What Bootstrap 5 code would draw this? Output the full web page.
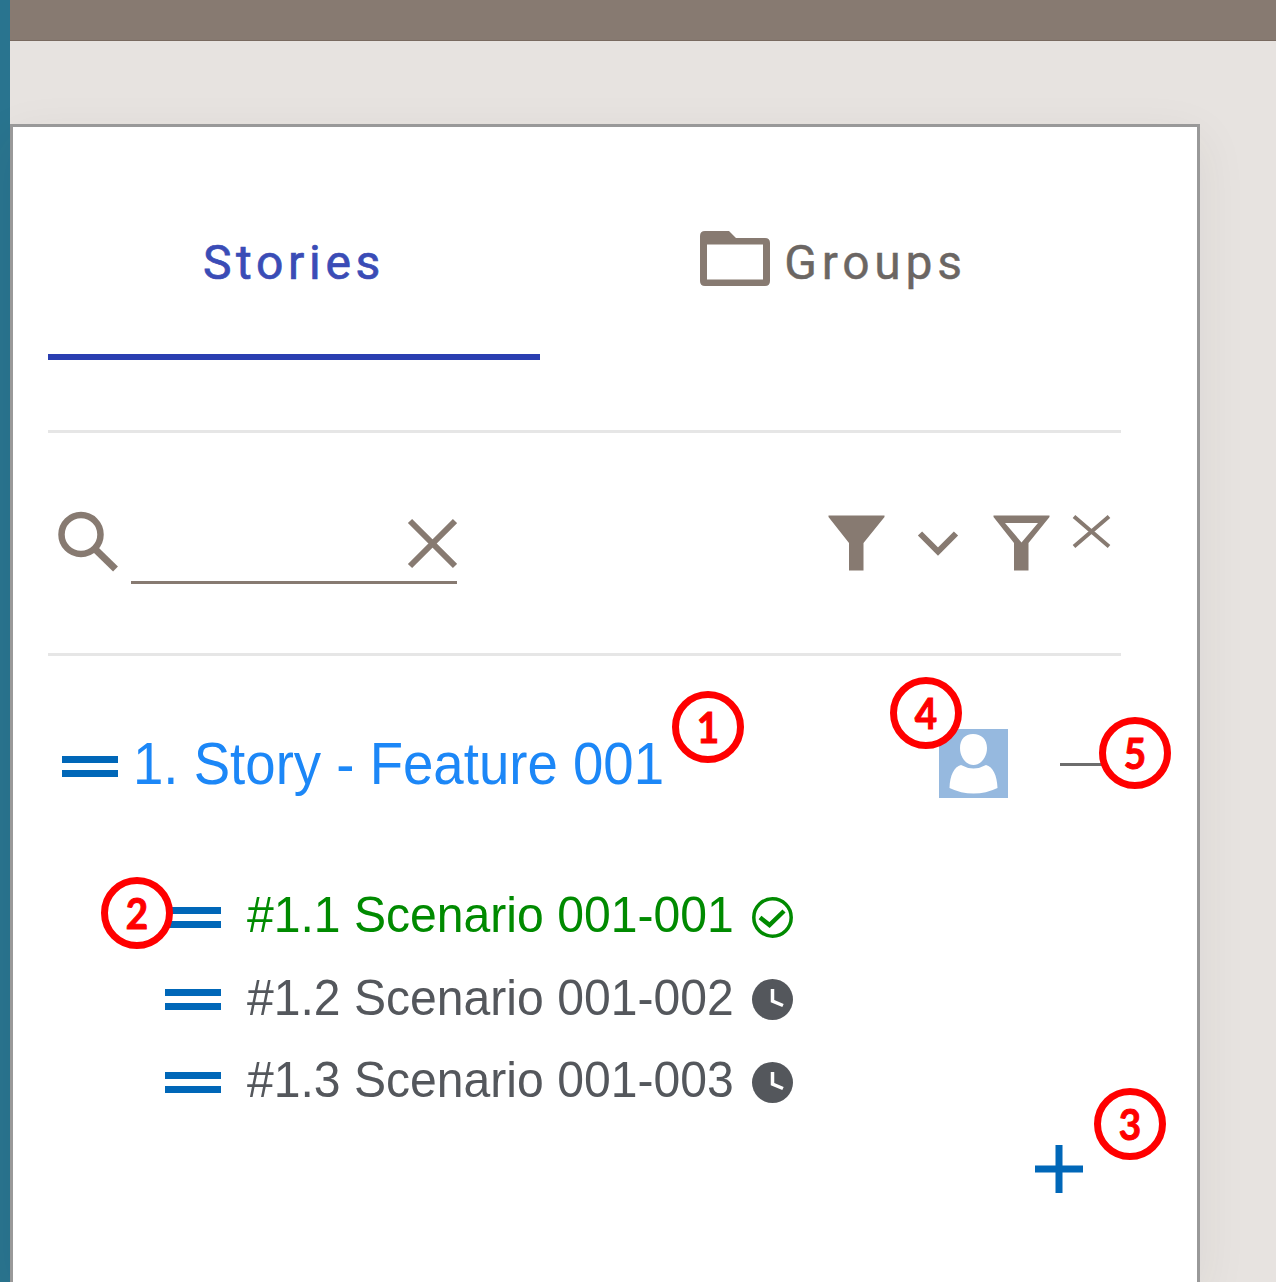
<!DOCTYPE html>
<html lang="en">
<head>
<meta charset="utf-8">
<meta name="viewport" content="width=device-width, initial-scale=1">
<title>Stories</title>
<link href="https://cdn.jsdelivr.net/npm/bootstrap@5.3.0/dist/css/bootstrap.min.css" rel="stylesheet">
<style>
  :root { --taupe: #877a71; --brand: #0067b8; }
  body { background: #e7e3e0; font-family: "Liberation Sans", Arial, sans-serif; color: #54575c; }
  svg { display: block; flex: none; }
  .side-rail { width: 10px; background: #29748f; flex: none; }
  .top-strip { height: 41px; background: var(--taupe); border-bottom: 1px solid #796a60; }
  .story-panel { width: 1190px; margin-top: 83px; padding: 0 76px 0 35px; background: #fff; border: 3px solid #999; border-bottom: 0; box-shadow: 0 14px 48px rgba(60,50,40,.07); }
  .tab-bar { height: 233px; }
  .tab-item { padding-top: 100px; font: 400 48px/72px Roboto, sans-serif; letter-spacing: 4.7px; }
  .tab-stories { width: 492px; color: #3a4cb6; border-bottom: 6px solid #2a3eb1; -webkit-text-stroke: .7px #3a4cb6; }
  .tab-groups { color: #6b6663; padding-left: 6px; -webkit-text-stroke: .4px #6b6663; }
  .tab-groups svg { margin: 4px 14px 0 0; }
  .rule { height: 3px; background: #e6e6e6; }
  .rule-first { margin-top: 70px; }
  .tool-bar { height: 220px; padding: 78px 0 0 10px; }
  .search-field { width: 326px; height: 73px; margin-left: 11px; border-bottom: 3px solid var(--taupe); }
  .story-row { height: 88px; margin-top: 63px; padding-left: 14px; }
  .story-row > svg { margin-top: 6px; }
  .story-title { font-size: 54.6px; line-height: 88px; color: #1c87f7; margin: 4px 0 0 15px; }
  .story-title span { display: inline-block; transform: scaleY(1.08); }
  .scenario-list { margin-top: 69px; padding-left: 117px; }
  .scenario { height: 82.5px; font-size: 48.1px; line-height: 82px; }
  .scenario-name { display: inline-block; width: 505px; margin: -6px 0 0 26px; transform: scaleY(1.04); white-space: nowrap; }
  .passed { color: #008a00; }
  .callout { position: absolute; width: 72px; height: 72px; border: 7px solid #f00; border-radius: 50%; background: #fff; color: #f00; font: 700 42px/58px Lato, sans-serif; text-align: center; -webkit-text-stroke: 1px #f00; z-index: 2; }
  .callout span { display: block; transform: scaleX(.92); }
  .callout-title { left: 539px; top: -30px; }
  .callout-drag { left: -64px; top: 1px; }
  .callout-user { left: -49px; top: -52px; }
  .callout-fold { left: 39px; top: -46px; }
  .callout-add { left: 59px; top: -57px; }
  .avatar-box { margin-left: auto; }
  .fold-box { margin: 2px 11px 0 52px; }
  .add-row { margin-top: 21.5px; padding-right: 38px; }
</style>
</head>
<body>
<div class="d-flex vh-100 overflow-hidden">
  <div class="side-rail"></div>
  <div class="d-flex flex-column flex-grow-1">
    <header class="top-strip flex-shrink-0"></header>
    <main class="story-panel flex-grow-1">
      <nav class="tab-bar d-flex">
        <div class="tab-item tab-stories text-center">Stories</div>
        <div class="tab-item tab-groups flex-grow-1 d-flex justify-content-center align-items-start">
          <svg width="70" height="56" viewBox="0 0 70 56"><path fill="#877a71" fill-rule="evenodd" d="M5 0H29L36 7H65Q70 7 70 12V50Q70 55 65 55H5Q0 55 0 50V5Q0 0 5 0ZM7 13.500V48.500H63V13.500Z"/></svg>
          <span>Groups</span>
        </div>
      </nav>
      <div class="rule rule-first"></div>
      <div class="tool-bar d-flex align-items-start">
        <svg width="62" height="62" viewBox="0 0 62 62" fill="none" stroke="#877a71"><circle cx="23" cy="23.500" r="19.500" stroke-width="6.500"/><path d="M37 38L57.500 58" stroke-width="7"/></svg>
        <div class="search-field d-flex justify-content-end">
          <svg width="50" height="62" viewBox="0 0 50 62" fill="none" stroke="#877a71" stroke-width="6"><path d="M3 10L48 55M48 10L3 55"/></svg>
        </div>
        <div class="d-flex ms-auto">
          <svg width="57" height="62" viewBox="0 0 57 62"><path fill="#877a71" d="M0.500 4.500H56.500V6L35.500 32V59.500H21V32L0.500 6Z"/></svg>
          <svg width="108" height="62" viewBox="0 0 108 62"><path fill="none" stroke="#877a71" stroke-width="6" d="M35 22.500L53 40.500L71 22.500"/></svg>
          <svg width="57" height="62" viewBox="0 0 57 62"><path fill="#877a71" fill-rule="evenodd" d="M0.500 4.500H56.500V6L35.500 32V59.500H21V32L0.500 6ZM12 12L28.500 31.500L45 12Z"/></svg>
          <svg width="71" height="62" viewBox="0 0 71 62"><path fill="none" stroke="#877a71" stroke-width="4" d="M24 5.500L59 35.500M59 5.500L24 35.500"/></svg>
        </div>
      </div>
      <div class="rule"></div>

      <section class="story-row d-flex align-items-center position-relative">
        <svg width="56" height="21" viewBox="0 0 56 21" fill="#0067b8"><path d="M0 0H56V7H0ZM0 14H56V21H0Z"/></svg>
        <div class="story-title position-relative text-nowrap"><span>1. Story - Feature 001</span>
          <div class="callout callout-title"><span>1</span></div>
        </div>
        <div class="avatar-box position-relative">
          <svg width="69" height="69" viewBox="0 0 69 69"><path fill="#96b9df" d="M0 0H69V69H0Z"/><path fill="#fff" d="M34 5C42.500 5 48 10.500 48 19C48 28 42 36 34.500 36C27 36 21 28 21 19C21 10.500 26 5 34 5ZM22 36Q34.500 43 47 36C54 38 58 46 58.500 59Q47 64.500 34.500 64.500Q22 64.500 10.500 59C11 46 15 38 22 36Z"/></svg>
          <div class="callout callout-user"><span>4</span></div>
        </div>
        <div class="fold-box position-relative">
          <svg width="50" height="3" viewBox="0 0 50 3"><path fill="#6d6d6d" d="M0 0H50V3H0Z"/></svg>
          <div class="callout callout-fold"><span>5</span></div>
        </div>
      </section>

      <section class="scenario-list">
        <div class="scenario passed d-flex align-items-center position-relative">
          <svg width="56" height="21" viewBox="0 0 56 21" fill="#0067b8"><path d="M0 0H56V7H0ZM0 14H56V21H0Z"/></svg>
          <div class="callout callout-drag"><span>2</span></div>
          <span class="scenario-name">#1.1 Scenario 001-001</span>
          <svg width="41" height="41" viewBox="0 0 41 41" fill="none" stroke="#008a00"><circle cx="20.500" cy="20.500" r="18.700" stroke-width="3.500"/><path d="M8 20.500L17.500 28L32 14" stroke-width="4.500"/></svg>
        </div>
        <div class="scenario d-flex align-items-center">
          <svg width="56" height="21" viewBox="0 0 56 21" fill="#0067b8"><path d="M0 0H56V7H0ZM0 14H56V21H0Z"/></svg>
          <span class="scenario-name">#1.2 Scenario 001-002</span>
          <svg width="41" height="41" viewBox="0 0 41 41"><circle cx="20.500" cy="20.500" r="20.500" fill="#54575c"/><path d="M20.500 10V22L31 26.500" fill="none" stroke="#fff" stroke-width="3.500"/></svg>
        </div>
        <div class="scenario d-flex align-items-center">
          <svg width="56" height="21" viewBox="0 0 56 21" fill="#0067b8"><path d="M0 0H56V7H0ZM0 14H56V21H0Z"/></svg>
          <span class="scenario-name">#1.3 Scenario 001-003</span>
          <svg width="41" height="41" viewBox="0 0 41 41"><circle cx="20.500" cy="20.500" r="20.500" fill="#54575c"/><path d="M20.500 10V22L31 26.500" fill="none" stroke="#fff" stroke-width="3.500"/></svg>
        </div>
      </section>
      <div class="add-row d-flex justify-content-end">
        <div class="position-relative">
          <svg width="48" height="48" viewBox="0 0 48 48"><path fill="none" stroke="#0067b8" stroke-width="7" d="M24 0V48M0 24H48"/></svg>
          <div class="callout callout-add"><span>3</span></div>
        </div>
      </div>
    </main>
  </div>
</div>
<script src="https://cdn.jsdelivr.net/npm/bootstrap@5.3.0/dist/js/bootstrap.bundle.min.js"></script>
</body>
</html>
